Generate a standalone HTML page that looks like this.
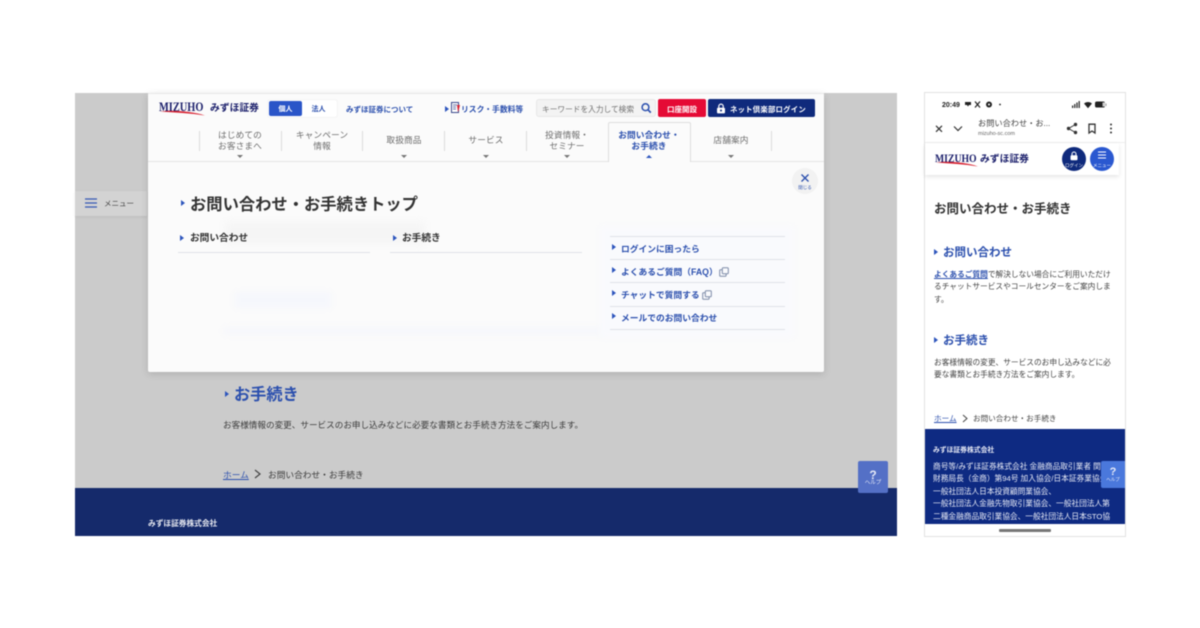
<!DOCTYPE html>
<html lang="ja"><head><meta charset="utf-8"><title>お問い合わせ・お手続き</title>
<style>
html,body{margin:0;padding:0;background:#fff}
body{width:1200px;height:628px;position:relative;overflow:hidden;font-family:"Liberation Sans","Noto Sans CJK JP",sans-serif;color:#333}
.a,.t{position:absolute}
.t{white-space:nowrap;line-height:1;margin-top:1.5px}
.b{font-weight:700}
.c{text-align:center}
.tri{position:absolute;width:0;height:0;border-left:5px solid #2d55bd;border-top:3px solid transparent;border-bottom:3px solid transparent}
.dn{position:absolute;width:0;height:0;border-top:3px solid #777;border-left:3px solid transparent;border-right:3px solid transparent}
.sep{position:absolute;width:1px;height:20px;top:131px;background:#ddd}
.nav{position:absolute;top:130px;width:80px;text-align:center;font-size:8.7px;line-height:10.5px;color:#6f6f6f;letter-spacing:.1px}
.ln{position:absolute;height:1px;background:#dfe2e8}
.lk{color:#2c50ae;font-weight:700}
.blur{filter:blur(.4px)}
.logo{font-family:'Liberation Serif',serif;font-weight:700;color:#1b1f6b;transform-origin:0 50%;margin-top:0}
</style></head><body>
<div class="blur">
<!-- desktop -->
<div class="a" style="left:75px;top:93px;width:822px;height:443px;background:#cbcbcb;overflow:hidden">
 <div class="a" style="left:0;top:395px;width:822px;height:48px;background:#152a6b"></div>
</div>
<div class="tri" style="left:225px;top:391px;border-left-width:4px"></div>
<div class="t b" style="left:234px;top:385px;font-size:16.2px;color:#2c50ae">お手続き</div>
<div class="t" style="left:223px;top:419px;font-size:8.6px;color:#3c3c3c">お客様情報の変更、サービスのお申し込みなどに必要な書類とお手続き方法をご案内します。</div>
<div class="t" style="left:223px;top:469px;font-size:8.7px;color:#2c50ae;text-decoration:underline">ホーム</div>
<svg class="a" style="left:253px;top:469px" width="9" height="10"><path d="M2 1l5 4-5 4" fill="none" stroke="#444" stroke-width="1.2"/></svg>
<div class="t" style="left:268px;top:469px;font-size:8.7px;color:#3c3c3c">お問い合わせ・お手続き</div>
<div class="t b" style="left:148px;top:518px;font-size:7.7px;color:#e6e8f0">みずほ証券株式会社</div>

<!-- side menu tab -->
<div class="a" style="left:75px;top:191px;width:72px;height:25px;background:#d3d3d3;box-shadow:0 1px 3px rgba(0,0,0,.08)"></div>
<svg class="a" style="left:85px;top:198px" width="12" height="10"><path d="M0 1h12M0 5h12M0 9h12" stroke="#3558b5" stroke-width="1.2"/></svg>
<div class="t" style="left:104px;top:198.500px;font-size:7.500px;color:#444">メニュー</div>

<!-- modal -->
<div class="a" style="left:148px;top:93px;width:676px;height:279px;background:#fbfbfb;border-radius:0 0 2px 2px;box-shadow:0 2px 8px rgba(0,0,0,.14);border-top:1px solid #e8e8e8;box-sizing:border-box"></div>
<!-- ghost text -->
<div class="a" style="left:235px;top:292px;width:96px;height:16px;background:#f5f7fc;filter:blur(3px)"></div>
<div class="a" style="left:224px;top:327px;width:380px;height:8px;background:#f6f7fb;filter:blur(3px)"></div>
<div class="a" style="left:225px;top:222px;width:200px;height:22px;background:#f5f5f5;filter:blur(4px)"></div>
<div class="a" style="left:600px;top:226px;width:194px;height:112px;background:#f9fafd;filter:blur(3px)"></div>

<!-- logo -->
<div class="t logo" style="left:159px;top:101px;font-size:12.500px;transform:scaleX(.83)">MIZUHO</div>
<svg class="a" style="left:159px;top:110px" width="47" height="7"><path d="M1 1.500C14 .2 32 1 46 5.500 32 3.200 15 2.600 1 1.500z" fill="#d8202f"/></svg>
<div class="t b" style="left:210px;top:102px;font-size:9.800px;color:#1b1f6b">みずほ証券</div>
<div class="a" style="left:268px;top:100px;width:69px;height:17px;background:#fff;border-radius:2px;box-shadow:0 0 1px #ccc"></div>
<div class="a" style="left:269px;top:101px;width:33px;height:15px;background:#2a55c8;border-radius:2px"></div>
<div class="t b c" style="left:269px;top:104.500px;width:33px;font-size:7px;color:#fff">個人</div>
<div class="t b c" style="left:302px;top:104.500px;width:33px;font-size:7px;color:#2c50ae">法人</div>
<div class="t b" style="left:346px;top:104px;font-size:7.500px;color:#2c50ae">みずほ証券について</div>
<div class="tri" style="left:445px;top:106px;border-left-width:4px"></div>
<svg class="a" style="left:451px;top:102px" width="9" height="12"><rect x=".5" y=".5" width="7" height="10" fill="#fff" stroke="#3a4a8c"/><path d="M2 3h4M2 5h3M2 7h3" stroke="#3a4a8c" stroke-width=".7"/><path d="M6 3h3l-1.200 5-.8 2z" fill="#d8202f"/></svg>
<div class="t b" style="left:461px;top:104px;font-size:7.800px;color:#2c50ae">リスク・手数料等</div>
<div class="a" style="left:536px;top:99px;width:120px;height:18px;background:#f3f3f3;border:1px solid #e8e8e8;border-radius:3px;box-sizing:border-box"></div>
<div class="t" style="left:542px;top:104px;font-size:7.700px;color:#707070">キーワードを入力して検索</div>
<svg class="a" style="left:640px;top:102px" width="12" height="12"><circle cx="5.500" cy="5.200" r="3.400" fill="none" stroke="#2c50ae" stroke-width="1.500"/><path d="M8 7.800l2.800 2.800" stroke="#2c50ae" stroke-width="1.700"/></svg>
<div class="a" style="left:658px;top:99px;width:48px;height:18px;background:#e50a35;border-radius:2px"></div>
<div class="t b c" style="left:658px;top:104px;width:48px;font-size:7.500px;color:#fff">口座開設</div>
<div class="a" style="left:708px;top:99px;width:107px;height:18px;background:#0f2a7c;border-radius:2px"></div>
<svg class="a" style="left:716px;top:103px" width="10" height="11"><path d="M2.800 5V3.300a2.200 2.200 0 0 1 4.400 0V5" fill="none" stroke="#fff" stroke-width="1.200"/><rect x="1" y="4.800" width="8" height="5.600" rx="1" fill="#fff"/><circle cx="5" cy="7.500" r="1" fill="#0f2a7c"/></svg>
<div class="t b" style="left:730px;top:104px;font-size:7.400px;color:#fff;letter-spacing:.2px">ネット倶楽部ログイン</div>

<!-- nav -->
<div class="a" style="left:148px;top:161px;width:676px;height:1px;background:#e4e4e4"></div>
<div class="sep" style="left:199px"></div><div class="sep" style="left:281px"></div><div class="sep" style="left:362px"></div><div class="sep" style="left:444px"></div><div class="sep" style="left:526px"></div><div class="sep" style="left:771px"></div>
<div class="nav" style="left:200px">はじめての<br>お客さまへ</div><div class="dn" style="left:237px;top:155px"></div>
<div class="nav" style="left:282px">キャンペーン<br>情報</div>
<div class="nav" style="left:364px;top:135px">取扱商品</div><div class="dn" style="left:401px;top:155px"></div>
<div class="nav" style="left:446px;top:135px">サービス</div><div class="dn" style="left:483px;top:155px"></div>
<div class="nav" style="left:527px">投資情報・<br>セミナー</div><div class="dn" style="left:564px;top:155px"></div>
<div class="a" style="left:608px;top:122px;width:83px;height:40px;background:#fbfbfb;border:1px solid #dedede;border-bottom:0;border-radius:2px 2px 0 0;box-sizing:border-box"></div>
<div class="nav b" style="left:609px;color:#2c50ae">お問い合わせ・<br>お手続き</div>
<div class="a" style="left:646px;top:155px;width:0;height:0;border-bottom:3px solid #2d55bd;border-left:3px solid transparent;border-right:3px solid transparent"></div>
<div class="nav" style="left:691px;top:135px">店舗案内</div><div class="dn" style="left:728px;top:155px"></div>

<!-- close -->
<div class="a" style="left:792px;top:168px;width:26px;height:26px;border-radius:50%;background:#f2f2f2"></div>
<svg class="a" style="left:800px;top:173px" width="10" height="10"><path d="M1.500 1.500l7 7M8.500 1.500l-7 7" stroke="#2c50ae" stroke-width="1.400"/></svg>
<div class="t c" style="left:792px;top:184px;width:26px;font-size:4.500px;color:#2c50ae">閉じる</div>

<!-- modal content -->
<div class="tri" style="left:181px;top:200px;border-left-width:4px"></div>
<div class="t b" style="left:190px;top:195.500px;font-size:16.300px;color:#333">お問い合わせ・お手続きトップ</div>
<div class="tri" style="left:180px;top:235px;border-left-width:4px"></div>
<div class="t b" style="left:190px;top:232.500px;font-size:9.700px;color:#333">お問い合わせ</div>
<div class="ln" style="left:178px;top:252px;width:192px"></div>
<div class="tri" style="left:393px;top:235px;border-left-width:4px"></div>
<div class="t b" style="left:402px;top:232.500px;font-size:9.700px;color:#333">お手続き</div>
<div class="ln" style="left:390px;top:252px;width:192px"></div>

<div class="ln" style="left:610px;top:236px;width:175px"></div>
<div class="ln" style="left:610px;top:259px;width:175px"></div>
<div class="ln" style="left:610px;top:282px;width:175px"></div>
<div class="ln" style="left:610px;top:306px;width:175px"></div>
<div class="ln" style="left:610px;top:329px;width:175px"></div>
<div class="tri" style="left:612px;top:244px;border-left-width:4px"></div>
<div class="t lk" style="left:621px;top:243px;font-size:8.750px">ログインに困ったら</div>
<div class="tri" style="left:612px;top:267px;border-left-width:4px"></div>
<div class="t lk" style="left:621px;top:266px;font-size:8.750px">よくあるご質問（FAQ）</div>
<svg class="a" style="left:719px;top:267px" width="10" height="10"><rect x="3.300" y=".8" width="6" height="6" rx="1" fill="none" stroke="#7d8ba8"/><path d="M3 2.800H1.500a.8.8 0 0 0-.8.8v4.800a.8.8 0 0 0 .8.8h4.800a.8.8 0 0 0 .8-.8V7" fill="none" stroke="#7d8ba8"/></svg>
<div class="tri" style="left:612px;top:290px;border-left-width:4px"></div>
<div class="t lk" style="left:621px;top:289.500px;font-size:8.750px">チャットで質問する</div>
<svg class="a" style="left:702px;top:290px" width="10" height="10"><rect x="3.300" y=".8" width="6" height="6" rx="1" fill="none" stroke="#7d8ba8"/><path d="M3 2.800H1.500a.8.8 0 0 0-.8.8v4.800a.8.8 0 0 0 .8.8h4.800a.8.8 0 0 0 .8-.8V7" fill="none" stroke="#7d8ba8"/></svg>
<div class="tri" style="left:612px;top:313px;border-left-width:4px"></div>
<div class="t lk" style="left:621px;top:312px;font-size:8.750px">メールでのお問い合わせ</div>

<!-- help -->
<div class="a" style="left:858px;top:461px;width:30px;height:32px;background:#5470c6;border-radius:2px"></div>
<div class="t b c" style="left:858px;top:467px;width:30px;font-size:12px;color:#e6eaf7">?</div>
<div class="t c" style="left:858px;top:479px;width:30px;font-size:5.500px;color:#e6eaf7">ヘルプ</div>

<!-- phone -->
<div class="a" style="left:925px;top:93px;width:200px;height:443px;background:#fff;outline:1px solid #e2e2e2"></div>
<div class="t b" style="left:942px;top:100px;font-size:7px;color:#222">20:49</div>
<svg class="a" style="left:964px;top:100px" width="38" height="9"><path d="M1 2h6v3H5L4 6.500 3 5H1z" fill="#222"/><path d="M11 1.500l5 6M16 1.500l-5 6" stroke="#222" stroke-width="1.200"/><circle cx="25" cy="4.500" r="3" fill="#222"/><circle cx="25" cy="4.500" r="1" fill="#fff"/><circle cx="36" cy="4.500" r=".9" fill="#222"/></svg>
<svg class="a" style="left:1071px;top:100px" width="37" height="9"><path d="M1 5.500h1.200V8H1zM3.200 4h1.200v4H3.200zM5.400 2.500h1.200V8H5.400zM7.600 1h1.200v7H7.600z" fill="#222"/><path d="M13 3.500a6 6 0 0 1 8 0L17 8.300z" fill="#222"/><rect x="24" y="1.500" width="10" height="6" rx="1.800" fill="#222"/><rect x="34.500" y="3.500" width="1" height="2.500" fill="#999"/><rect x="31.500" y="2.500" width="2.500" height="4" fill="#ccc"/></svg>
<svg class="a" style="left:935px;top:125px" width="28" height="8"><path d="M1 .8l6 6M7 .8l-6 6M19 1.500l4 4 4-4" fill="none" stroke="#333" stroke-width="1.200"/></svg>
<div class="t" style="left:978px;top:118px;font-size:8.200px;color:#444">お問い合わせ・お...</div>
<div class="t" style="left:978px;top:130px;font-size:5.500px;color:#666">mizuho-sc.com</div>
<svg class="a" style="left:1066px;top:122px" width="50" height="13"><circle cx="2.500" cy="6.500" r="1.700" fill="#333"/><circle cx="9.500" cy="2.500" r="1.700" fill="#333"/><circle cx="9.500" cy="10.500" r="1.700" fill="#333"/><path d="M9.500 2.500l-7 4 7 4" fill="none" stroke="#333"/><path d="M23 2.200h6v8.800l-3-2-3 2z" fill="none" stroke="#333" stroke-width="1.300"/><circle cx="45" cy="2.500" r="1" fill="#333"/><circle cx="45" cy="6.500" r="1" fill="#333"/><circle cx="45" cy="10.500" r="1" fill="#333"/></svg>
<div class="a" style="left:925px;top:142px;width:200px;height:1px;background:#eee"></div>
<div class="a" style="left:925px;top:143px;width:194px;height:32px;background:#fff;box-shadow:0 2px 4px rgba(0,0,0,.1)"></div>
<div class="t logo" style="left:935px;top:152px;font-size:12px;transform:scaleX(.81)">MIZUHO</div>
<svg class="a" style="left:935px;top:161px" width="44" height="7"><path d="M1 1.500C14 .2 30 1 43 5.500 30 3.200 14 2.600 1 1.500z" fill="#d8202f"/></svg>
<div class="t b" style="left:980px;top:153px;font-size:9.800px;color:#1b1f6b">みずほ証券</div>
<div class="a" style="left:1062px;top:147px;width:24px;height:24px;border-radius:50%;background:#0f2a7c"></div>
<svg class="a" style="left:1069px;top:151px" width="10" height="10"><path d="M3 4.500V3a2 2 0 0 1 4 0v1.500" fill="none" stroke="#fff"/><rect x="1.500" y="4.300" width="7" height="5" rx="1" fill="#fff"/></svg>
<div class="t c" style="left:1062px;top:162px;width:24px;font-size:4.500px;color:#fff">ログイン</div>
<div class="a" style="left:1090px;top:147px;width:24px;height:24px;border-radius:50%;background:#2a58d0"></div>
<svg class="a" style="left:1097px;top:151px" width="10" height="9"><path d="M1 1h8M1 4h8M1 7h8" stroke="#fff" stroke-width="1"/></svg>
<div class="t c" style="left:1090px;top:162px;width:24px;font-size:4.500px;color:#fff">メニュー</div>

<div class="t b" style="left:934px;top:201px;font-size:12.500px;color:#333">お問い合わせ・お手続き</div>
<div class="tri" style="left:934px;top:249px;border-left-width:4px"></div>
<div class="t b" style="left:943px;top:246px;font-size:11.500px;color:#2c50ae">お問い合わせ</div>
<div class="t" style="left:934px;top:267px;font-size:7.700px;line-height:12.500px;color:#444;white-space:normal;width:180px">
<span class="b" style="color:#2c50ae;text-decoration:underline">よくあるご質問</span>で解決しない場合にご利用いただけ<br>るチャットサービスやコールセンターをご案内しま<br>す。</div>
<div class="tri" style="left:934px;top:337px;border-left-width:4px"></div>
<div class="t b" style="left:943px;top:334px;font-size:11.500px;color:#2c50ae">お手続き</div>
<div class="t" style="left:934px;top:355px;font-size:7.700px;line-height:12.500px;color:#444;white-space:normal;width:180px">お客様情報の変更、サービスのお申し込みなどに必<br>要な書類とお手続き方法をご案内します。</div>
<div class="t" style="left:934px;top:413px;font-size:7.600px;color:#2c50ae;text-decoration:underline">ホーム</div>
<svg class="a" style="left:961px;top:414px" width="8" height="9"><path d="M2 1l4 3.500L2 8" fill="none" stroke="#444"/></svg>
<div class="t" style="left:973px;top:413px;font-size:7.600px;color:#444">お問い合わせ・お手続き</div>
<div class="a" style="left:925px;top:429px;width:200px;height:95px;background:#0e2a82;overflow:hidden">
 <div class="t b" style="left:8px;top:17px;font-size:6.800px;color:#e8ebf6">みずほ証券株式会社</div>
 <div class="t" style="left:8px;top:30.500px;font-size:7.700px;line-height:12.400px;color:#e8ebf6">商号等/みずほ証券株式会社 金融商品取引業者 関東<br>財務局長（金商）第94号 加入協会/日本証券業協会、<br>一般社団法人日本投資顧問業協会、<br>一般社団法人金融先物取引業協会、一般社団法人第<br>二種金融商品取引業協会、一般社団法人日本STO協</div>
</div>
<div class="a" style="left:1101px;top:461px;width:24px;height:27px;background:#4a78dc;border-radius:2px 0 0 2px"></div>
<div class="t b c" style="left:1101px;top:465px;width:24px;font-size:11px;color:#e6eaf7">?</div>
<div class="t c" style="left:1101px;top:476px;width:24px;font-size:4.500px;color:#e6eaf7">ヘルプ</div>
<div class="a" style="left:999px;top:529px;width:52px;height:2.500px;border-radius:1px;background:#777"></div>
</div>
</body></html>
